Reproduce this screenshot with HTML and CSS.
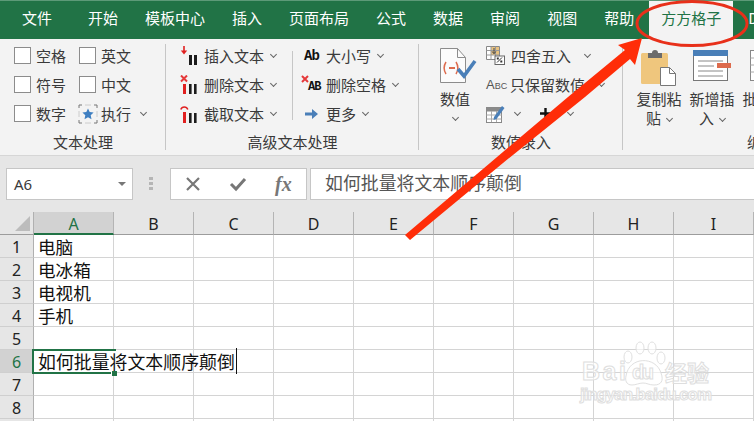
FILE: index.html
```html
<!DOCTYPE html>
<html lang="zh">
<head>
    <meta charset="UTF-8">
    <title>方方格子</title>
    <link rel="stylesheet" href="styles.css">
</head>
<body>
<div class="app">
    <div class="tabs">
        <span class="tab first">文件</span>
        <span class="tab">开始</span>
        <span class="tab">模板中心</span>
        <span class="tab">插入</span>
        <span class="tab">页面布局</span>
        <span class="tab">公式</span>
        <span class="tab">数据</span>
        <span class="tab">审阅</span>
        <span class="tab">视图</span>
        <span class="tab">帮助</span>
        <span class="tab current">方方格子</span>
        <span class="tab">DIY</span>
    </div>

    <div class="ribbon">
        <!-- 文本处理 -->
        <div class="group g1">
            <div class="group-body checks">
                <label class="check"><i class="box"></i>空格</label>
                <label class="check"><i class="box"></i>英文</label>
                <label class="check"><i class="box"></i>符号</label>
                <label class="check"><i class="box"></i>中文</label>
                <label class="check"><i class="box"></i>数字</label>
                <label class="check run">
                    <svg class="star" width="20" height="20" viewBox="0 0 20 20">
                        <path d="M1 4V1h3M16 1h3v3M19 16v3h-3M4 19H1v-3" fill="none" stroke="#777"/>
                        <path d="M1 7v6M7 1h6M19 7v6M7 19h6" fill="none" stroke="#ccc"/>
                        <path d="M10 4.5l1.7 3.6 3.9.5-2.9 2.7.8 3.9-3.5-2-3.5 2 .8-3.9-2.9-2.7 3.9-.5z" fill="#3f7fc1"/>
                    </svg>执行<i class="chev"></i>
                </label>
            </div>
            <div class="group-label">文本处理</div>
        </div>

        <!-- 高级文本处理 -->
        <div class="group g2">
            <div class="group-body">
                <div class="col col-a">
                    <div class="row">
                        <svg class="icon" width="18" height="20" viewBox="0 0 18 20">
                            <path d="M4 0v7" stroke="#e02020" stroke-width="1.6"/>
                            <path d="M0.8 4.5L4 8.5l3.2-4z" fill="#e02020"/>
                            <rect x="9" y="9" width="3" height="10" fill="#1c1c1c"/>
                            <rect x="14" y="9" width="3" height="10" fill="#1c1c1c"/>
                        </svg>插入文本<i class="chev"></i>
                    </div>
                    <div class="row">
                        <svg class="icon" width="18" height="20" viewBox="0 0 18 20">
                            <path d="M1 0.5l6 6M7 0.5l-6 6" stroke="#e5393a" stroke-width="2"/>
                            <rect x="3" y="9" width="3" height="10" fill="#e02020"/>
                            <rect x="9" y="9" width="2.6" height="10" fill="#1c1c1c"/>
                            <rect x="14" y="9" width="2.6" height="10" fill="#1c1c1c"/>
                        </svg>删除文本<i class="chev"></i>
                    </div>
                    <div class="row">
                        <svg class="icon" width="18" height="20" viewBox="0 0 18 20">
                            <path d="M0.8 5.5a3.7 3.7 0 0 1 7 0" fill="none" stroke="#e02020" stroke-width="1.5"/>
                            <rect x="3" y="8" width="3" height="11" fill="#e02020"/>
                            <rect x="9" y="9" width="2.6" height="10" fill="#1c1c1c"/>
                            <rect x="14" y="9" width="2.6" height="10" fill="#1c1c1c"/>
                        </svg>截取文本<i class="chev"></i>
                    </div>
                </div>
                <div class="vline"></div>
                <div class="col col-b">
                    <div class="row"><span class="icon txt-ab">Ab</span>大小写<i class="chev"></i></div>
                    <div class="row">
                        <span class="icon txt-del">
                            <svg width="8" height="8" viewBox="0 0 8 8"><path d="M1 1l6 6M7 1l-6 6" stroke="#e5393a" stroke-width="2"/></svg>
                            <b>AB</b>
                        </span>删除空格<i class="chev"></i>
                    </div>
                    <div class="row">
                        <svg class="icon" width="16" height="12" viewBox="0 0 16 12">
                            <path d="M1 4.5h7V1l6 5-6 5V7.5H1z" fill="#4a7fb8"/>
                        </svg>更多<i class="chev"></i>
                    </div>
                </div>
            </div>
            <div class="group-label">高级文本处理</div>
        </div>

        <!-- 数值录入 -->
        <div class="group g3">
            <div class="group-body">
                <div class="big value-btn">
                    <svg width="38" height="37" viewBox="0 0 38 37">
                        <path d="M1.5 1.5h17l8 9v25h-25z" fill="#fbfbfb" stroke="#8c8c8c"/>
                        <path d="M18.5 1.5v9h8" fill="none" stroke="#8c8c8c"/>
                        <path d="M8 11c-2.500 4-2.500 8 0 12M18 11c2.500 4 2.500 8 0 12" fill="none" stroke="#dd6b4d" stroke-width="1.500" transform="translate(-1 4)"/>
                        <path d="M10 21h6" stroke="#dd6b4d" stroke-width="2"/>
                        <path d="M19 22l6 7 11-15" fill="none" stroke="#4a7fb8" stroke-width="3.600"/>
                    </svg>
                    <span class="big-label">数值</span>
                    <i class="chev"></i>
                </div>
                <div class="col col-c">
                    <div class="row">
                        <svg class="icon" width="19" height="19" viewBox="0 0 19 19">
                            <path d="M.5.5h13v13H.5z" fill="#fff" stroke="#888"/>
                            <rect x="5" y="1" width="8" height="8" fill="#e9c27f"/>
                            <path d="M.5 4.500h13M.5 9h13M5 .5v13M9.500 .5v13" stroke="#999"/>
                            <path d="M8 2v5M6.200 5.500L8 7.800l1.800-2.300" fill="none" stroke="#444"/>
                            <rect x="9" y="10" width="9.500" height="8.500" fill="#fff" stroke="#666"/>
                            <path d="M11 16.500l5-5" stroke="#333"/>
                            <rect x="10.800" y="11.500" width="2" height="2" fill="#333"/>
                            <rect x="14.300" y="14.500" width="2" height="2" fill="#333"/>
                        </svg>四舍五入<i class="chev far"></i>
                    </div>
                    <div class="row">
                        <span class="icon txt-abc">Abc</span>只保留数值<i class="chev far"></i>
                    </div>
                    <div class="row">
                        <svg class="icon" width="19" height="19" viewBox="0 0 19 19">
                            <rect x=".5" y="3.500" width="15" height="15" fill="#fff" stroke="#888"/>
                            <rect x=".5" y="3.500" width="15" height="4" fill="#8a8a8a"/>
                            <path d="M.5 11h15M.5 15h15M5.500 7v11M10.500 7v11" stroke="#aaa"/>
                            <path d="M8 13L16 2l2.500 2-8 11-3 1z" fill="#4a7fb8"/>
                        </svg><i class="chev near"></i>
                        <svg class="plus" width="13" height="13" viewBox="0 0 13 13">
                            <path d="M6.500 1v11M1 6.500h11" stroke="#111" stroke-width="2.400"/>
                        </svg><i class="chev"></i>
                    </div>
                </div>
            </div>
            <div class="group-label">数值录入</div>
        </div>

        <!-- 编辑 -->
        <div class="group g4">
            <div class="group-body">
                <div class="big wrap-btn">
                    <svg width="36" height="38" viewBox="0 0 36 38">
                        <rect x="0" y="5" width="27" height="31" rx="1.500" fill="#efc67d"/>
                        <path d="M7 5h4a3 3 0 0 1 6 0h4v5H7z" fill="#6b6b6b"/>
                        <path d="M19.500 19.500h9l6 6v12h-15z" fill="#fff" stroke="#777"/>
                        <path d="M28.500 19.500v6h6" fill="none" stroke="#777"/>
                    </svg>
                    <span class="big-label">复制粘贴<i class="chev"></i></span>
                </div>
                <div class="big wrap-btn">
                    <svg width="40" height="38" viewBox="0 0 40 38">
                        <rect x="1.500" y="2.500" width="34" height="30" fill="#fff" stroke="#777"/>
                        <rect x="1" y="2" width="35" height="6" fill="#4a7fb8"/>
                        <path d="M6 13h25M6 18h16M6 23h25M6 28h25" stroke="#888"/>
                        <rect x="25" y="15" width="14" height="5" fill="#dd6b4d"/>
                    </svg>
                    <span class="big-label">新增插入<i class="chev"></i></span>
                </div>
                <div class="big wrap-btn">
                    <svg width="36" height="38" viewBox="0 0 36 38">
                        <rect x="3.500" y="2.500" width="30" height="30" fill="#fff" stroke="#888"/>
                        <path d="M3.500 10h30M3.500 17h30M3.500 24h30M11 2v30" stroke="#aaa"/>
                    </svg>
                    <span class="big-label">批量删除</span>
                </div>
            </div>
            <div class="group-label edit-label">编辑</div>
        </div>
    </div>

    <div class="formula-row">
        <div class="name-box">A6<i class="caret"></i></div>
        <div class="grip"><i></i><i></i><i></i></div>
        <div class="fx-box">
            <svg width="16" height="16" viewBox="0 0 16 16"><path d="M2 2l12 12M14 2L2 14" stroke="#777" stroke-width="2.200"/></svg>
            <svg width="18" height="16" viewBox="0 0 18 16"><path d="M2 8l5 5L16 3" fill="none" stroke="#777" stroke-width="3"/></svg>
            <span class="fx">fx</span>
        </div>
        <div class="formula">如何批量将文本顺序颠倒</div>
    </div>

    <div class="sheet">
        <div class="head corner"><i class="tri"></i></div>
        <div class="head col-head selected">A</div>
        <div class="head col-head">B</div>
        <div class="head col-head">C</div>
        <div class="head col-head">D</div>
        <div class="head col-head">E</div>
        <div class="head col-head">F</div>
        <div class="head col-head">G</div>
        <div class="head col-head">H</div>
        <div class="head col-head">I</div>

        <div class="head row-head">1</div>
        <div class="cell">电脑</div><div class="cell"></div><div class="cell"></div><div class="cell"></div><div class="cell"></div><div class="cell"></div><div class="cell"></div><div class="cell"></div><div class="cell"></div>
        <div class="head row-head">2</div>
        <div class="cell">电冰箱</div><div class="cell"></div><div class="cell"></div><div class="cell"></div><div class="cell"></div><div class="cell"></div><div class="cell"></div><div class="cell"></div><div class="cell"></div>
        <div class="head row-head">3</div>
        <div class="cell">电视机</div><div class="cell"></div><div class="cell"></div><div class="cell"></div><div class="cell"></div><div class="cell"></div><div class="cell"></div><div class="cell"></div><div class="cell"></div>
        <div class="head row-head">4</div>
        <div class="cell">手机</div><div class="cell"></div><div class="cell"></div><div class="cell"></div><div class="cell"></div><div class="cell"></div><div class="cell"></div><div class="cell"></div><div class="cell"></div>
        <div class="head row-head">5</div>
        <div class="cell"></div><div class="cell"></div><div class="cell"></div><div class="cell"></div><div class="cell"></div><div class="cell"></div><div class="cell"></div><div class="cell"></div><div class="cell"></div>
        <div class="head row-head selected-row">6</div>
        <div class="cell active"><span class="editing">如何批量将文本顺序颠倒</span><i class="handle"></i></div><div class="cell"></div><div class="cell"></div><div class="cell"></div><div class="cell"></div><div class="cell"></div><div class="cell"></div><div class="cell"></div><div class="cell"></div>
        <div class="head row-head">7</div>
        <div class="cell"></div><div class="cell"></div><div class="cell"></div><div class="cell"></div><div class="cell"></div><div class="cell"></div><div class="cell"></div><div class="cell"></div><div class="cell"></div>
        <div class="head row-head">8</div>
        <div class="cell"></div><div class="cell"></div><div class="cell"></div><div class="cell"></div><div class="cell"></div><div class="cell"></div><div class="cell"></div><div class="cell"></div><div class="cell"></div>
        <div class="head row-head"></div>
        <div class="cell"></div><div class="cell"></div><div class="cell"></div><div class="cell"></div><div class="cell"></div><div class="cell"></div><div class="cell"></div><div class="cell"></div><div class="cell"></div>
    </div>

    <!-- 水印 -->
    <svg class="watermark" width="140" height="72" viewBox="0 0 140 72">
        <g fill="#fff" fill-opacity=".6" stroke="#e0e0e0" stroke-width="1">
            <ellipse cx="51" cy="19" rx="4" ry="6"/>
            <ellipse cx="63" cy="10" rx="4" ry="6"/>
            <ellipse cx="75" cy="10" rx="4" ry="6"/>
            <ellipse cx="84" cy="20" rx="4" ry="6"/>
            <path d="M49 38c3-20 30-20 35-3 3 8 0 12-7 12-5 0-7-2-11-2-4 0-7 2-11 2-6 0-7-5-6-9z"/>
        </g>
        <g class="wm-text" fill="#fff" fill-opacity=".6" stroke="#dedede" stroke-width="1">
            <text x="5" y="42" font-size="25" textLength="44">Bai</text>
            <text x="55" y="41" font-size="20" textLength="22">du</text>
            <text x="88" y="43" font-size="22">经验</text>
            <text x="3" y="62" font-size="17" textLength="132">jingyan.baidu.com</text>
        </g>
    </svg>

    <!-- 红圈和箭头 -->
    <svg class="mark" width="754" height="421" viewBox="0 0 754 421">
        <ellipse cx="692" cy="23.500" rx="55" ry="22" fill="none" stroke="#e8301a" stroke-width="3"/>
        <polygon points="405,235 490,163 568,97 625,50 618,45 642,38 635,65 630,59 585,97 503,163 410,240" fill="#ff2d08"/>
    </svg>
</div>
</body>
</html>
```

FILE: styles.css
```css
* {
    padding: 0;
    margin: 0;
    box-sizing: border-box;
}
body {
    background-color: #fff;
    font-family: "Noto Sans CJK SC", "Noto Sans", sans-serif;
    color: #3a3a3a;
}
i {
    font-style: normal;
}
.app {
    position: relative;
    width: 754px;
    height: 421px;
    overflow: hidden;
}

/* tabs */
.tabs {
    display: flex;
    height: 39px;
    padding-left: 22px;
    gap: 27px;
    background-color: #217346;
    border-top: 1px solid #5d9a78;
    white-space: nowrap;
}
.tab {
    font-size: 15px;
    line-height: 34px;
    color: #fff;
}
.first {
    margin-right: 9px;
}
.current {
    margin-left: -12px;
    margin-right: -12px;
    padding: 0 12px;
    background-color: #f3f3f3;
    color: #217346;
}

/* ribbon */
.ribbon {
    display: flex;
    height: 117px;
    background-color: #f3f3f3;
    border-bottom: 1px solid #d6d6d6;
    font-size: 15px;
    white-space: nowrap;
}
.group {
    position: relative;
    display: flex;
    flex-direction: column;
    flex: none;
    height: 116px;
}
.group::after {
    content: "";
    position: absolute;
    right: 0;
    top: 5px;
    bottom: 5px;
    width: 1px;
    background-color: #c6c6c6;
}
.g1 { width: 166px; }
.g2 { width: 253px; }
.g3 { width: 204px; }
.g4 { width: 131px; }
.g4::after { display: none; }
.group-body {
    display: flex;
    height: 90px;
    padding-top: 2px;
}
.group-label {
    height: 26px;
    font-size: 15px;
    line-height: 26px;
    text-align: center;
}
.edit-label {
    padding-left: 124px;
    text-align: left;
}

.checks {
    display: grid;
    grid-template-columns: 65px 80px;
    grid-auto-rows: 29px;
    padding-left: 14px;
}
.check {
    display: flex;
    align-items: center;
    gap: 5px;
}
.box {
    width: 17px;
    height: 17px;
    background-color: #fff;
    border: 1px solid #8c8c8c;
}
.run {
    margin-left: -1px;
    gap: 3px;
}
.star {
    flex: none;
}

.g2 .group-body {
    padding-left: 14px;
}
.col {
    display: flex;
    flex-direction: column;
}
.col-a {
    width: 112px;
}
.col-b {
    padding-left: 11px;
}
.vline {
    width: 1px;
    height: 69px;
    margin-top: 10px;
    background-color: #c6c6c6;
}
.row {
    display: flex;
    align-items: center;
    height: 29px;
}
.icon {
    flex: none;
    margin-right: 6px;
}
.chev {
    flex: none;
    display: inline-block;
    width: 5px;
    height: 5px;
    margin-left: 7px;
    margin-bottom: 3px;
    border-right: 1px solid #666;
    border-bottom: 1px solid #666;
    transform: rotate(45deg);
}
.far {
    margin-left: 14px;
}
.near {
    margin-left: 4px;
}
.plus {
    margin-left: 19px;
    margin-right: 9px;
}
.txt-ab {
    width: 16px;
    font-family: "Liberation Mono", monospace;
    font-size: 14px;
    font-weight: bold;
    color: #111;
    letter-spacing: -1px;
}
.txt-del {
    position: relative;
    width: 16px;
    height: 20px;
    margin-left: -3px;
    margin-right: 9px;
}
.txt-del svg {
    position: absolute;
    left: 0;
    top: 0;
}
.txt-del b {
    position: absolute;
    left: 7px;
    top: 4px;
    font-family: "Liberation Mono", monospace;
    font-size: 12px;
    line-height: 16px;
    color: #111;
    letter-spacing: -1px;
}
.txt-abc {
    width: 18px;
    font-family: "Liberation Sans", sans-serif;
    font-size: 13px;
    font-variant: small-caps;
    color: #555;
}
.col-c {
    margin-left: 8px;
}

.big {
    display: flex;
    flex-direction: column;
    align-items: center;
}
.value-btn {
    width: 46px;
    margin-left: 13px;
    padding-top: 6px;
}
.value-btn svg {
    margin-left: 6px;
}
.big-label {
    line-height: 19px;
    margin-top: 5px;
}
.value-btn .chev {
    margin: 7px 0 0;
}
.g4 .group-body {
    padding-left: 13px;
    gap: 7px;
}
.wrap-btn {
    flex: none;
    width: 46px;
    padding-top: 7px;
}
.wrap-btn svg {
    flex: none;
    margin-bottom: 1px;
}
.wrap-btn .big-label {
    width: 46px;
    white-space: normal;
    text-align: center;
    margin-top: 2px;
}
.wrap-btn .chev {
    margin-left: 6px;
}

/* formula bar */
.formula-row {
    display: flex;
    align-items: flex-start;
    height: 56px;
    padding: 12px 0 0 6px;
    background-color: #e6e6e6;
}
.name-box {
    display: flex;
    align-items: center;
    justify-content: space-between;
    width: 127px;
    height: 32px;
    padding: 0 6px 0 7px;
    background-color: #fff;
    border: 1px solid #c6c6c6;
    font-family: "Noto Sans", sans-serif;
    font-size: 15px;
}
.caret {
    width: 0;
    height: 0;
    border-left: 4px solid transparent;
    border-right: 4px solid transparent;
    border-top: 4px solid #777;
}
.grip {
    display: flex;
    flex-direction: column;
    gap: 2px;
    width: 37px;
    padding: 9px 0 0 16px;
}
.grip i {
    width: 4px;
    height: 3px;
    background-color: #b5b5b5;
}
.fx-box {
    display: flex;
    align-items: center;
    width: 137px;
    height: 32px;
    padding-left: 14px;
    gap: 28px;
    background-color: #fff;
    border: 1px solid #c6c6c6;
}
.fx {
    font-family: "Liberation Serif", serif;
    font-size: 20px;
    font-style: italic;
    font-weight: bold;
    color: #777;
}
.formula {
    flex: 1;
    height: 32px;
    margin-left: 3px;
    padding-left: 14px;
    background-color: #fff;
    border: 1px solid #c6c6c6;
    border-right: 0;
    font-size: 17.9px;
    line-height: 27px;
    color: #555;
    white-space: nowrap;
}

/* sheet */
.sheet {
    display: grid;
    grid-template-columns: 34px repeat(9, 80px);
    grid-auto-rows: 23px;
    font-size: 17.6px;
    color: #111;
}
.head {
    display: flex;
    align-items: center;
    justify-content: center;
    background-color: #e6e6e6;
    font-family: "Noto Sans", sans-serif;
    font-size: 16px;
    color: #222;
}
.corner {
    position: relative;
    border-right: 1px solid #b0b0b0;
    border-bottom: 1px solid #9c9c9c;
}
.tri {
    position: absolute;
    right: 3px;
    bottom: 3px;
    width: 0;
    height: 0;
    border-left: 15px solid transparent;
    border-bottom: 15px solid #bcbcbc;
}
.col-head {
    padding-top: 2px;
    border-right: 1px solid #b4b4b4;
    border-bottom: 1px solid #9c9c9c;
}
.row-head {
    padding-top: 2px;
    border-right: 1px solid #b0b0b0;
    border-bottom: 1px solid #cfcfcf;
}
.selected {
    background-color: #d2d2d2;
    border-bottom: 2px solid #217346;
    color: #217346;
}
.selected-row {
    background-color: #d2d2d2;
    color: #217346;
}
.cell {
    padding-left: 4px;
    border-right: 1px solid #d4d4d4;
    border-bottom: 1px solid #d4d4d4;
    line-height: 23px;
    white-space: nowrap;
}
.active {
    position: relative;
    z-index: 1;
    border-right: 0;
}
/* 编辑状态:文字盖过右边框 */
.active::before {
    content: "";
    position: absolute;
    left: -2px;
    top: -1px;
    right: -2px;
    bottom: -2px;
    border: 2px solid #217346;
    border-right: 0;
}
.editing {
    position: relative;
    padding-right: 1px;
    border-right: 1px solid #111;
    font-size: 17.9px;
}
.handle {
    position: absolute;
    right: -3px;
    bottom: -4px;
    width: 6px;
    height: 5px;
    background-color: #217346;
    border-left: 1px solid #fff;
}

/* overlays */
.watermark {
    position: absolute;
    left: 577px;
    top: 338px;
}
.wm-text {
    font-family: "Liberation Sans", "Noto Sans CJK SC", sans-serif;
    font-weight: bold;
}
.mark {
    position: absolute;
    left: 0;
    top: 0;
}
```
